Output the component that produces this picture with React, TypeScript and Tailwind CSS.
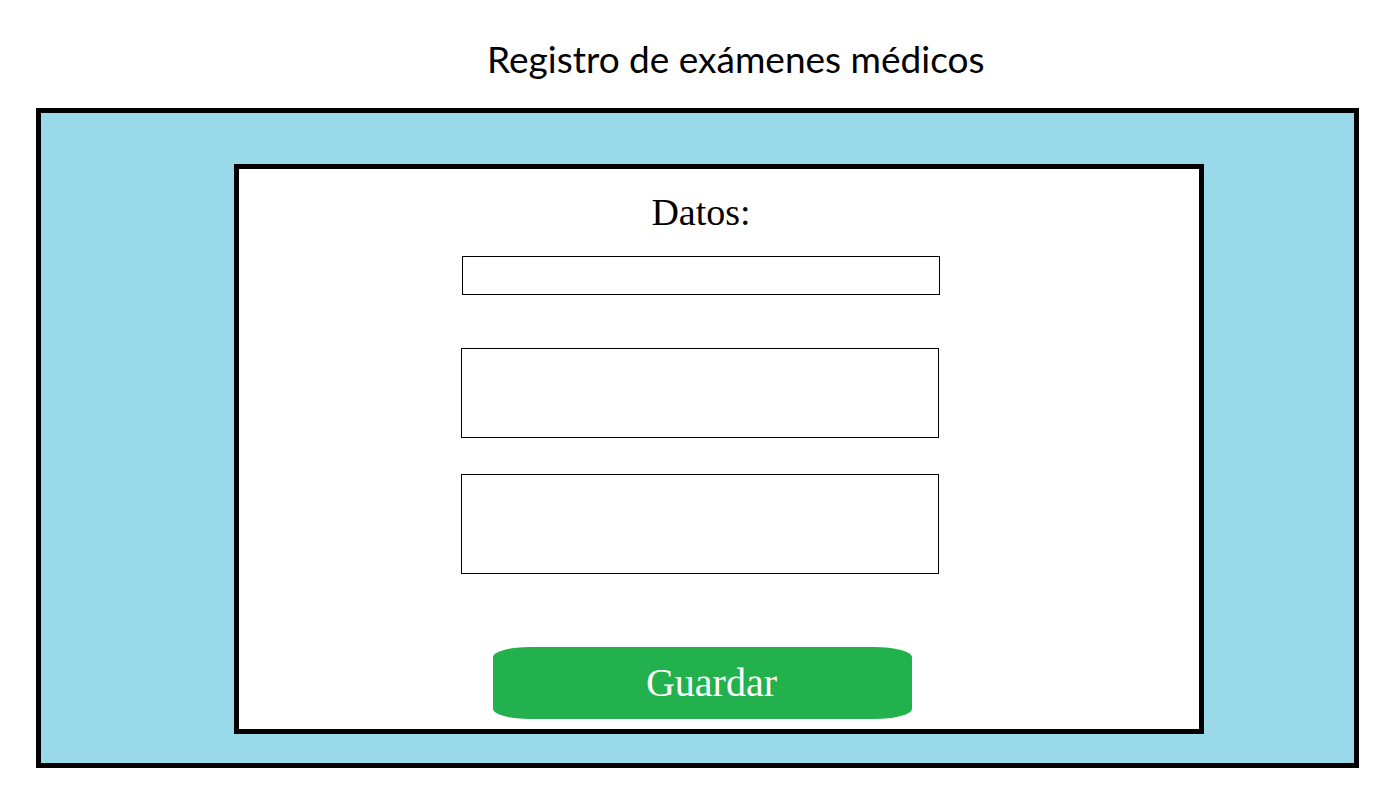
import React from "react";

export default function App() {
  return (
    <div className="w-[1395px] h-[802px] bg-white relative overflow-hidden">
      <div className="h-[108px] pl-[487px] pt-[37px]">
        <h1
          className="text-[37px] leading-[44px] text-black whitespace-nowrap"
          style={{ fontFamily: "Lato, 'Open Sans', sans-serif" }}
        >
          Registro de exámenes médicos
        </h1>
      </div>
      <div className="ml-[36px] w-[1323px] h-[660px] border-[5px] border-black bg-[#99d9ea] pl-[193px] pt-[51px]">
        <div className="w-[970px] h-[570px] border-[5px] border-black bg-white pl-[223px]">
          <div
            className="w-[478px] flex flex-col"
            style={{ fontFamily: "'Liberation Serif', serif" }}
          >
            <div className="mt-[21px] h-[44px] text-[38px] leading-[44px] text-black text-center">
              Datos:
            </div>
            <input
              type="text"
              className="mt-[22px] w-[478px] h-[39px] border border-black bg-white outline-none"
            />
            <textarea className="mt-[53px] -ml-px w-[478px] h-[90px] border border-black bg-white outline-none resize-none" />
            <textarea className="mt-[36px] -ml-px w-[478px] h-[100px] border border-black bg-white outline-none resize-none" />
            <button className="mt-[73px] ml-[31px] w-[419px] h-[72px] bg-[#22b14c] rounded-[38px/10px] text-white text-[40px] leading-[72px] pl-[18px]">
              Guardar
            </button>
          </div>
        </div>
      </div>
    </div>
  );
}
